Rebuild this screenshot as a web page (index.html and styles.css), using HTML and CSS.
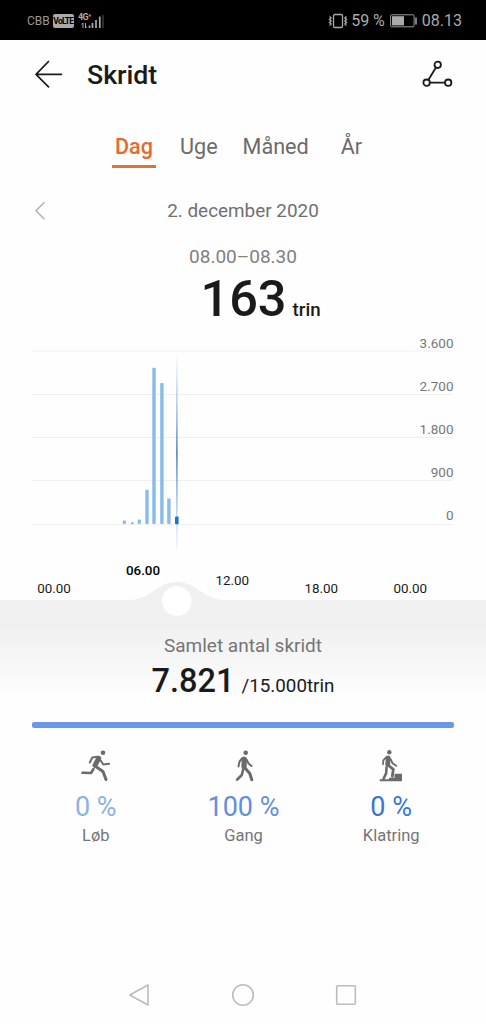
FILE: index.html
```html
<!DOCTYPE html>
<html lang="da">
<head>
  <meta charset="UTF-8">
  <meta name="viewport" content="width=device-width, initial-scale=1.0">
  <title>Skridt</title>
  <link rel="stylesheet" href="styles.css">
</head>
<body>
  <!-- Status bar -->
  <div class="status-bar">
    <div class="status-left">
      <span class="carrier">CBB</span>
      <span class="volte">VoLTE</span>
      <svg class="signal" width="28" height="18" viewBox="0 0 28 18">
        <text class="signal-type" x="0" y="8">4G⁺</text>
        <path d="M5 11v5M3.800 12.500L5 11M7.500 11v5M8.700 14.500L7.500 16" stroke="#aaa" stroke-width="1" fill="none"/>
        <path d="M11.500 13.500v2.500M14.500 11v5M18 8v8M21.800 4.500v11.500" stroke="#aaa" stroke-width="1.700"/>
        <path d="M25 3v13" stroke="#333" stroke-width="1.700"/>
      </svg>
    </div>
    <div class="status-right">
      <svg width="20" height="16" viewBox="0 0 20 16" fill="none" stroke="#aaa">
        <rect x="5.500" y="1.500" width="9" height="13" rx="1.200" stroke-width="1.300"/>
        <path d="M1.500 3.500l1.600 1.500-1.600 1.500 1.600 1.500-1.600 1.500 1.600 1.500-1.600 1.500M18.500 3.500l-1.600 1.500 1.600 1.500-1.600 1.500 1.600 1.500-1.600 1.500 1.600 1.500" stroke-width="1.400"/>
      </svg>
      <span class="battery-text">59 %</span>
      <svg class="battery" width="28" height="14" viewBox="0 0 28 14">
        <rect x=".6" y=".8" width="23.500" height="12" rx="1" fill="none" stroke="#999" stroke-width="1"/>
        <rect x="2" y="2.200" width="12" height="9.200" fill="#aaa"/>
        <rect x="25.200" y="3.500" width="1.600" height="7" fill="#999"/>
      </svg>
      <span class="clock">08.13</span>
    </div>
  </div>

  <!-- Header -->
  <header class="header">
    <svg width="30" height="30" viewBox="0 0 30 30" fill="none" stroke="#1a1a1a" stroke-width="1.700" stroke-linecap="round" stroke-linejoin="round">
      <path d="M28.500 14.300H3M15.500 1.500L3 14.300l12.500 12.500"/>
    </svg>
    <h1>Skridt</h1>
    <svg class="route" width="32" height="30" viewBox="0 0 32 30" fill="none" stroke="#1a1a1a" stroke-width="1.800">
      <circle cx="15.700" cy="4.800" r="3.200"/>
      <circle cx="4.600" cy="22.700" r="3.200"/>
      <circle cx="26.200" cy="22.700" r="3.200"/>
      <path d="M14 7.600L6.300 19.900M7.900 22.700h15.100"/>
    </svg>
  </header>

  <nav class="tabs">
    <a class="tab active">Dag</a>
    <a class="tab">Uge</a>
    <a class="tab">Måned</a>
    <a class="tab year">År</a>
  </nav>

  <div class="date-row">
    <svg width="12" height="20" viewBox="0 0 12 20" fill="none" stroke="#b5b5b5" stroke-width="1.600">
      <path d="M10.500 1.300L2 9.800l8.500 8.500"/>
    </svg>
    <span class="date">2. december 2020</span>
  </div>

  <div class="current">
    <div class="interval">08.00–08.30</div>
    <div class="steps"><span class="steps-value">163</span><span class="steps-unit">trin</span></div>
  </div>

  <!-- Chart -->
  <svg class="chart" width="486" height="270" viewBox="0 330 486 270">
    <defs>
      <linearGradient id="cursor" x1="0" y1="0" x2="0" y2="1">
        <stop offset="0" stop-color="#6f9fe0" stop-opacity="0"/>
        <stop offset=".25" stop-color="#6f9fe0" stop-opacity=".6"/>
        <stop offset=".5" stop-color="#3f74b5"/>
        <stop offset=".75" stop-color="#6f9fe0" stop-opacity=".6"/>
        <stop offset="1" stop-color="#6f9fe0" stop-opacity="0"/>
      </linearGradient>
    </defs>
    <g class="grid">
      <path d="M32 351h421M32 394.500h421M32 437.500h421M32 480.500h421M32 524.500h421"/>
    </g>
    <g class="scale">
      <text x="453.500" y="348">3.600</text>
      <text x="453.500" y="391">2.700</text>
      <text x="453.500" y="434">1.800</text>
      <text x="453.500" y="477">900</text>
      <text x="453.500" y="520.400">0</text>
    </g>
    <g class="bars">
      <rect x="122.800" y="520.500" width="3.200" height="3.500" rx="1"/>
      <rect x="130.800" y="522.300" width="3" height="2" rx="1"/>
      <rect x="137.700" y="519.500" width="3.200" height="4.500" rx="1"/>
      <rect x="145.300" y="489.700" width="3.400" height="34.300" rx="1"/>
      <rect x="152.300" y="367.800" width="3.400" height="156.200" rx="1"/>
      <rect x="160.200" y="383" width="3.400" height="141" rx="1"/>
      <rect x="167.200" y="498.500" width="3.400" height="25.500" rx="1"/>
    </g>
    <rect x="176.200" y="352" width="1.400" height="203" fill="url(#cursor)"/>
    <rect x="175" y="516.500" width="3.600" height="7.700" rx="1" fill="#1b74c5"/>
    <g class="hours">
      <text x="54" y="593.400">00.00</text>
      <text class="selected" x="143" y="575">06.00</text>
      <text x="232.300" y="585.400">12.00</text>
      <text x="321.300" y="593.400">18.00</text>
      <text x="410.300" y="593.400">00.00</text>
    </g>
    <path d="M128 600C152 600 156 582 177 582S202 600 226 600z" fill="#f0f0f0"/>
    <circle cx="176.800" cy="601" r="14.700" fill="#fff"/>
  </svg>

  <section class="summary">
    <div class="summary-title">Samlet antal skridt</div>
    <div class="total"><span class="total-value">7.821</span><span class="total-goal">/15.000trin</span></div>
    <div class="progress"></div>
  </section>

  <!-- Activity types -->
  <div class="activities">
    <div class="activity run">
      <svg width="32" height="32" viewBox="0 0 32 32" fill="none" stroke="#6b6b6b" stroke-linecap="round" stroke-linejoin="round">
        <circle cx="23" cy="2.800" r="2.300" fill="#6b6b6b" stroke="none"/>
        <path d="M18.700 8.300l-3.700 7" stroke-width="5"/>
        <path d="M17.500 6.700l-5.200.8-2.500 5M20.700 10.500l2.600 4 5.700-.7" stroke-width="2"/>
        <path d="M15 16l8 5.500 3 8" stroke-width="3"/>
        <path d="M13.500 19l-2.500 4-8.500-.2" stroke-width="2.600"/>
      </svg>
      <div class="percent">0 %</div>
      <div class="name">Løb</div>
    </div>
    <div class="activity walk">
      <svg width="32" height="32" viewBox="0 0 32 32" fill="none" stroke="#6b6b6b" stroke-linecap="round" stroke-linejoin="round">
        <circle cx="17.700" cy="2.800" r="2.300" fill="#6b6b6b" stroke="none"/>
        <path d="M16.300 9l-.3 8" stroke-width="5.200"/>
        <path d="M14.500 8l-3 3.500-1 5M18.500 9.500l2 4 3 2.500" stroke-width="2"/>
        <path d="M17 18l4.800 5.500 2 6.300" stroke-width="3"/>
        <path d="M15 20l-1.200 5-4.800 4.700" stroke-width="2.600"/>
      </svg>
      <div class="percent">100 %</div>
      <div class="name">Gang</div>
    </div>
    <div class="activity climb">
      <svg width="32" height="32" viewBox="0 0 32 32" fill="none" stroke="#6b6b6b" stroke-linecap="round" stroke-linejoin="round">
        <circle cx="14.300" cy="2.300" r="2.200" fill="#6b6b6b" stroke="none"/>
        <path d="M13.200 8l-.5 6.500" stroke-width="4.800"/>
        <path d="M11.500 6.800l-3.200 3.500-.3 4M15.500 9l2.200 4.500 3.600 2.300" stroke-width="1.800"/>
        <path d="M13.500 15.500l4.800 3.800-1 7" stroke-width="2.800"/>
        <path d="M11.500 17.500l-.3 5.500-2.700 6" stroke-width="2.600"/>
        <path d="M4.700 29.300h9.300v-1.500h5.500v-4h7.500v7.500H4.700z" fill="#6b6b6b" stroke="none"/>
      </svg>
      <div class="percent">0 %</div>
      <div class="name">Klatring</div>
    </div>
  </div>

  <!-- Navigation keys -->
  <div class="nav-bar">
    <svg width="24" height="24" viewBox="0 0 24 24"><path d="M20 2v20L1.800 12z"/></svg>
    <svg width="24" height="24" viewBox="0 0 24 24"><circle cx="12" cy="12" r="10.300"/></svg>
    <svg width="24" height="24" viewBox="0 0 24 24"><rect x="2.700" y="2.700" width="18.600" height="18.600" rx="1"/></svg>
  </div>
</body>
</html>
```
FILE: styles.css
```css
* {
  box-sizing: border-box;
}

body {
  margin: 0;
  width: 486px;
  height: 1024px;
  overflow: hidden;
  display: flex;
  flex-direction: column;
  background-color: #fefefe;
  color: #1a1a1a;
  font-family: Roboto, sans-serif;
}

svg {
  display: block;
  flex-shrink: 0;
}

/* Status bar */
.status-bar {
  height: 40px;
  padding: 1px 24px 0 27px;
  display: flex;
  align-items: center;
  justify-content: space-between;
  background-color: #000;
  color: #aaa;
}

.status-left, .status-right {
  display: flex;
  align-items: center;
}

.carrier {
  font-size: 12px;
  line-height: 18px;
  color: #999;
}

.volte {
  width: 21px;
  height: 14px;
  margin: 0 4px 0 3px;
  border-radius: 2px;
  background-color: #aaa;
  color: #000;
  font-size: 8.5px;
  font-weight: bold;
  line-height: 14px;
  text-align: center;
  letter-spacing: -0.8px;
}

.signal-type {
  font-size: 9px;
  font-weight: bold;
  letter-spacing: -0.6px;
  fill: #aaa;
}

.battery-text {
  margin-left: 3px;
  font-size: 16px;
}

.battery {
  margin: 0 4px 0 5px;
}

.clock {
  font-size: 16px;
}

/* Header */
.header {
  height: 70px;
  padding: 0 32px 0 33px;
  display: flex;
  align-items: center;
}

.header h1 {
  margin: 0 0 0 24px;
  font-size: 26.7px;
  font-weight: 500;
}

.route {
  margin-left: auto;
}

.tabs {
  height: 68px;
  padding: 19px 0 0 112px;
  display: flex;
  align-items: flex-start;
  color: #6b6b6b;
  font-size: 21.6px;
  line-height: 36px;
}

.tab {
  margin-right: 25px;
}

.tab.active {
  width: 44px;
  height: 39px;
  margin-right: 24px;
  border-bottom: 3px solid #e07238;
  color: #e8692c;
  font-weight: 500;
  text-align: center;
}

.tab.year {
  margin-left: 7px;
}

.date-row {
  height: 65px;
  padding: 0 35px 0 34px;
  display: flex;
  align-items: center;
}

.date {
  flex: 1;
  padding-right: 11px;
  color: #707070;
  font-size: 18.9px;
  text-align: center;
}

.current {
  height: 87px;
  text-align: center;
}

.interval {
  color: #808080;
  font-size: 19px;
  line-height: 28px;
}

.steps {
  padding-left: 35px;
  line-height: 55px;
}

.steps-value {
  font-size: 50.5px;
  font-weight: 500;
}

.steps-unit {
  margin-left: 6px;
  font-size: 18.7px;
  font-weight: 500;
}

/* Chart */
.chart {
  overflow: visible;
  position: relative;
}

.grid {
  stroke: #efefef;
  stroke-width: 1;
}

.scale {
  fill: #777777;
  font-size: 13.5px;
  text-anchor: end;
}

.bars {
  fill: #87bbe9;
}

.hours {
  fill: #1a1a1a;
  font-size: 13.4px;
  text-anchor: middle;
}

.hours .selected {
  fill: #000;
  font-weight: 500;
}

/* Summary */
.summary {
  height: 146px;
  padding: 32px 32px 0;
  background: linear-gradient(#f0f0f0 25px, #fefefe 100px);
  text-align: center;
}

.summary-title {
  color: #757575;
  font-size: 19px;
  line-height: 28px;
}

.total {
  line-height: 42px;
}

.total-value {
  font-size: 32.5px;
  font-weight: 500;
}

.total-goal {
  margin-left: 7px;
  font-size: 18.8px;
}

.progress {
  height: 6px;
  margin-top: 14px;
  border-radius: 2px;
  background-color: #6899e6;
}

/* Activity types */
.activities {
  padding: 4px 21px 0 22px;
  display: flex;
}

.activity {
  flex: 1;
  display: flex;
  flex-direction: column;
  align-items: center;
}

.percent {
  margin-top: 8px;
  font-size: 27px;
  line-height: 34px;
}

.run .percent {
  color: #8fb2df;
}

.walk .percent {
  color: #628fdb;
}

.climb .percent {
  color: #3b76d2;
}

.name {
  color: #757575;
  font-size: 16.5px;
  line-height: 23px;
}

/* Navigation keys */
.nav-bar {
  height: 58px;
  margin-top: auto;
  padding: 0 128px;
  display: flex;
  align-items: center;
  justify-content: space-between;
}

.nav-bar svg {
  fill: none;
  stroke: #bcbcbc;
  stroke-width: 1.6;
  stroke-linejoin: round;
}
```
